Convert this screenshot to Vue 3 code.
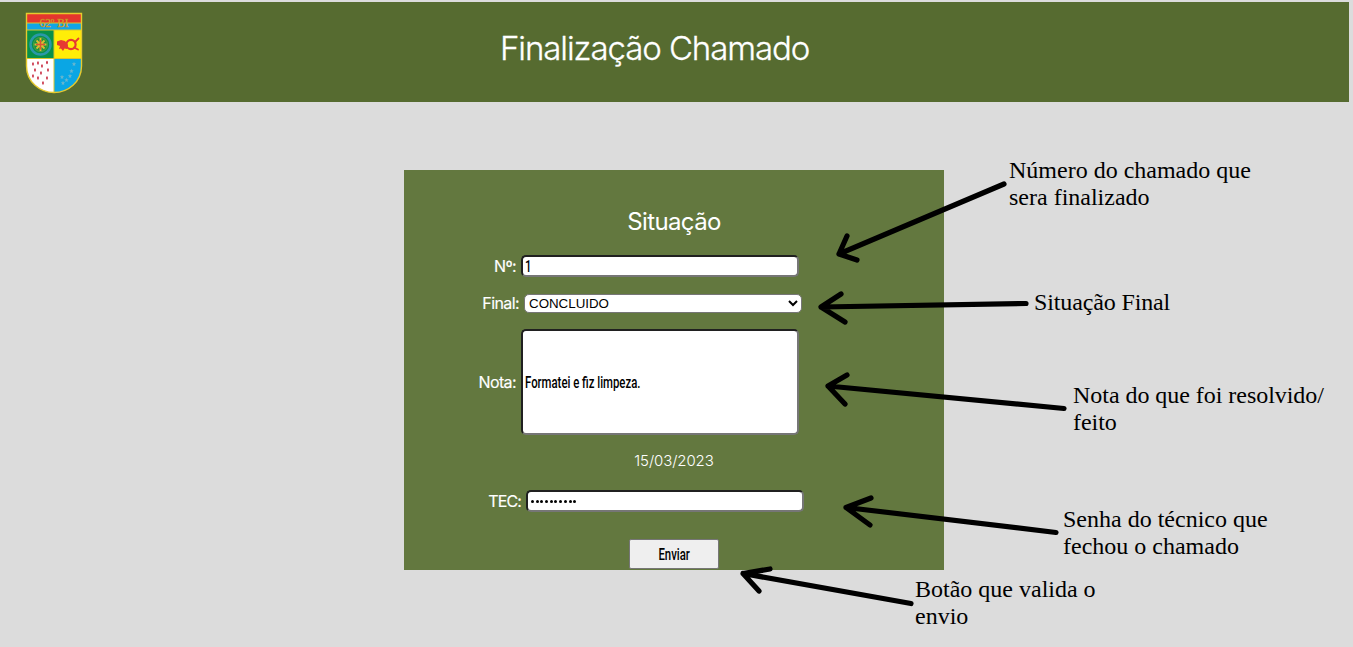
<script setup>
import { ref } from 'vue'

const numero = '1'
const nota = 'Formatei e fiz limpeza.'
const situacao = ref('CONCLUIDO')
const dots = 10

const notes = [
  { id: 'numero', lines: ['Número do chamado que', 'sera finalizado'] },
  { id: 'final', lines: ['Situação Final'] },
  { id: 'nota', lines: ['Nota do que foi resolvido/', 'feito'] },
  { id: 'senha', lines: ['Senha do técnico que', 'fechou o chamado'] },
  { id: 'botao', lines: ['Botão que valida o', 'envio'] },
]

const arrows = [
  'M1004 184L839 254M847 236L839 254L857 260',
  'M1026 303.500L821 307M841 294L821 307L845 322',
  'M1064 408.500L828 386M847 375L828 386L845 404',
  'M1056 532.500L846 507.500M871 498L846 507.500L870 525',
  'M911 603.500L743 573.500M770 569L743 573.500L759 591',
]

const drops = [
  [38, 63], [47, 62.5], [33, 64], [42, 66], [35, 70], [41, 73], [48, 70],
  [33, 76], [38, 78], [47, 78], [43, 83],
]
const stars = [[74, 64], [71.5, 71], [70, 76], [66.5, 80], [62, 77], [63, 83]]
</script>

<template>
  <div class="page">
    <header class="topbar">
      <svg class="crest" viewBox="25 12 58 82" width="58" height="82">
        <defs>
          <clipPath id="shield"><path d="M26.500 13.500H81.500V66C81.500 82 68 92.500 54 92.500S26.500 82 26.500 66Z" /></clipPath>
        </defs>
        <g clip-path="url(#shield)">
          <rect x="26" y="13" width="56" height="10" fill="#e5352d" />
          <rect x="26" y="23" width="56" height="7" fill="#12a5e6" />
          <rect x="26" y="30" width="28" height="29" fill="#08904a" />
          <rect x="54" y="30" width="28" height="29" fill="#ffed08" />
          <rect x="26" y="59" width="28" height="34" fill="#fff" />
          <rect x="54" y="59" width="28" height="34" fill="#0aa6e4" />
        </g>
        <path d="M26 23H82M26 30H82M26 58.500H82M54 30V93" stroke="#d9c52c" stroke-width="1" fill="none" />
        <circle cx="40.500" cy="44.500" r="10" fill="#08904a" stroke="#2a98a8" stroke-width="2.500" />
        <circle cx="40.500" cy="44.500" r="7" fill="#19923f" stroke="#6fa545" stroke-width=".7" />
        <path d="M40.500 38V51M34.500 44.500H46.500M36.500 40.500L44.500 48.500M44.500 40.500L36.500 48.500" stroke="#dcbf30" stroke-width="1.800" />
        <path d="M40.500 40V49.500M36 44.500H45" stroke="#d95435" stroke-width="1.500" />
        <circle cx="71" cy="44.500" r="4.600" fill="none" stroke="#e63932" stroke-width="2.200" />
        <path d="M57 41.500L61 40L65 41L68 45L67 49L64.500 48.500L63 51L61 48.500L59 49L60 46L57 45Z" fill="#e63932" />
        <path d="M74 47.500L78 49.500M75 42L78.500 38.500" stroke="#e63932" stroke-width="1.800" stroke-linecap="round" />
        <ellipse v-for="([x, y], i) in drops" :key="'d' + i" :cx="x" :cy="y" rx=".9" ry="1.700" fill="#c82c42" />
        <path v-for="([x, y], i) in stars" :key="'s' + i" :d="`M${x} ${y - 2.2}l.6 1.500 1.600.2-1.300 1 .4 1.600-1.300-.9-1.400.9.500-1.600-1.300-1 1.600-.2Z`" fill="#68b7cf" />
        <path d="M26.500 13.500H81.500V66C81.500 82 68 92.500 54 92.500S26.500 82 26.500 66Z" fill="none" stroke="#e6ca2e" stroke-width="1.400" />
        <text x="39.500" y="27.300" textLength="29" lengthAdjust="spacingAndGlyphs" class="crest-text">62º BI</text>
      </svg>
      <h1>Finalização Chamado</h1>
    </header>

    <main class="card">
      <h2>Situação</h2>
      <div class="row row-numero">
        <label>Nº:</label>
        <div class="field"><span class="narrow">{{ numero }}</span></div>
      </div>
      <div class="row row-final">
        <label>Final:</label>
        <select v-model="situacao"><option>CONCLUIDO</option></select>
      </div>
      <div class="row row-nota">
        <label>Nota:</label>
        <div class="field"><span class="narrow">{{ nota }}</span></div>
      </div>
      <p class="date">15/03/2023</p>
      <div class="row row-tec">
        <label>TEC:</label>
        <div class="field dots"><i v-for="n in dots" :key="n"></i></div>
      </div>
      <button type="button"><span class="narrow">Enviar</span></button>
    </main>

    <svg class="arrows" width="1353" height="647">
      <path v-for="d in arrows" :key="d" :d="d" />
    </svg>
    <p v-for="n in notes" :key="n.id" class="note" :class="'note-' + n.id">
      <span v-for="l in n.lines" :key="l">{{ l }}</span>
    </p>
  </div>
</template>

<style>
body { background: #dcdcdc; overflow: hidden; }
</style>

<style scoped>
* { box-sizing: border-box; }
.page { position: relative; width: 1353px; height: 647px; padding-top: 2px; overflow: hidden; background: #dcdcdc; font-family: Inter, "Open Sans", sans-serif; }
.topbar { display: flex; width: 1349px; height: 100px; padding: 10px 0 0 25px; background: #566b30; color: #fff; }
.crest { flex: none; }
.crest-text { font: 13px "Liberation Serif", serif; fill: #e8b529; stroke: #c08a24; stroke-width: .3px; }
h1 { margin: 14px 0 0 417px; font-size: 33px; line-height: 44px; font-weight: 300; letter-spacing: -1.08px; white-space: nowrap; -webkit-text-stroke: .3px #fff; }
.card { display: flex; flex-direction: column; width: 540px; height: 400px; margin: 68px 0 0 404px; padding-top: 35px; background: #63783f; color: #fff; }
h2 { margin: 0 0 16px; font-size: 24px; line-height: 34px; font-weight: 400; letter-spacing: -.6px; text-align: center; }
.row { display: flex; align-items: center; }
label { flex: none; padding-right: 5px; font-size: 16px; line-height: 20px; letter-spacing: -.6px; text-align: right; white-space: nowrap; -webkit-text-stroke: .15px #fff; }
.row-numero label, .row-nota label { width: 117px; }
.row-final label { width: 120px; }
.row-tec label { width: 122px; letter-spacing: -.9px; }
.field { display: flex; align-items: center; width: 278px; height: 22px; padding-left: 2px; border: 2px solid; border-color: #202020 #767676 #767676 #202020; border-radius: 5px; background: #fff; color: #000; }
.row-final { margin-top: 16px; height: 20px; }
select { width: 278px; height: 19px; padding: 0; border: 1px solid #767676; border-radius: 5px; background-color: #fff; color: #000; font: 13.333px "Liberation Sans", sans-serif; }
.row-nota { margin-top: 16px; }
.row-nota .field { height: 106px; }
.narrow { display: inline-block; font: 500 16px Roboto, sans-serif; white-space: nowrap; transform: scaleX(.71); transform-origin: left center; }
.date { margin: 16px 0 19px; font-size: 15px; line-height: 20px; font-weight: 300; letter-spacing: -.1px; text-align: center; }
.dots { gap: 1.700px; padding-left: 3px; }
.dots i { width: 3px; height: 3px; border-radius: 50%; background: #000; }
button { display: flex; align-items: center; justify-content: center; width: 90px; height: 30px; margin: 27px 0 0 225px; padding: 0; border: 1px solid #767676; border-radius: 2px; background: #efefef; color: #000; }
button .narrow { transform-origin: center; }
.arrows { position: absolute; inset: 0; fill: none; stroke: #000; stroke-width: 5.200; stroke-linecap: round; stroke-linejoin: round; }
.note { position: absolute; display: flex; flex-direction: column; margin: 0; color: #000; font: 24px/27px "Liberation Serif", serif; white-space: nowrap; }
.note-numero { left: 1009px; top: 157px; }
.note-final { left: 1034px; top: 289px; letter-spacing: -.13px; }
.note-nota { left: 1073px; top: 382px; letter-spacing: -.04px; }
.note-senha { left: 1063px; top: 506px; }
.note-botao { left: 915px; top: 576px; }
</style>
